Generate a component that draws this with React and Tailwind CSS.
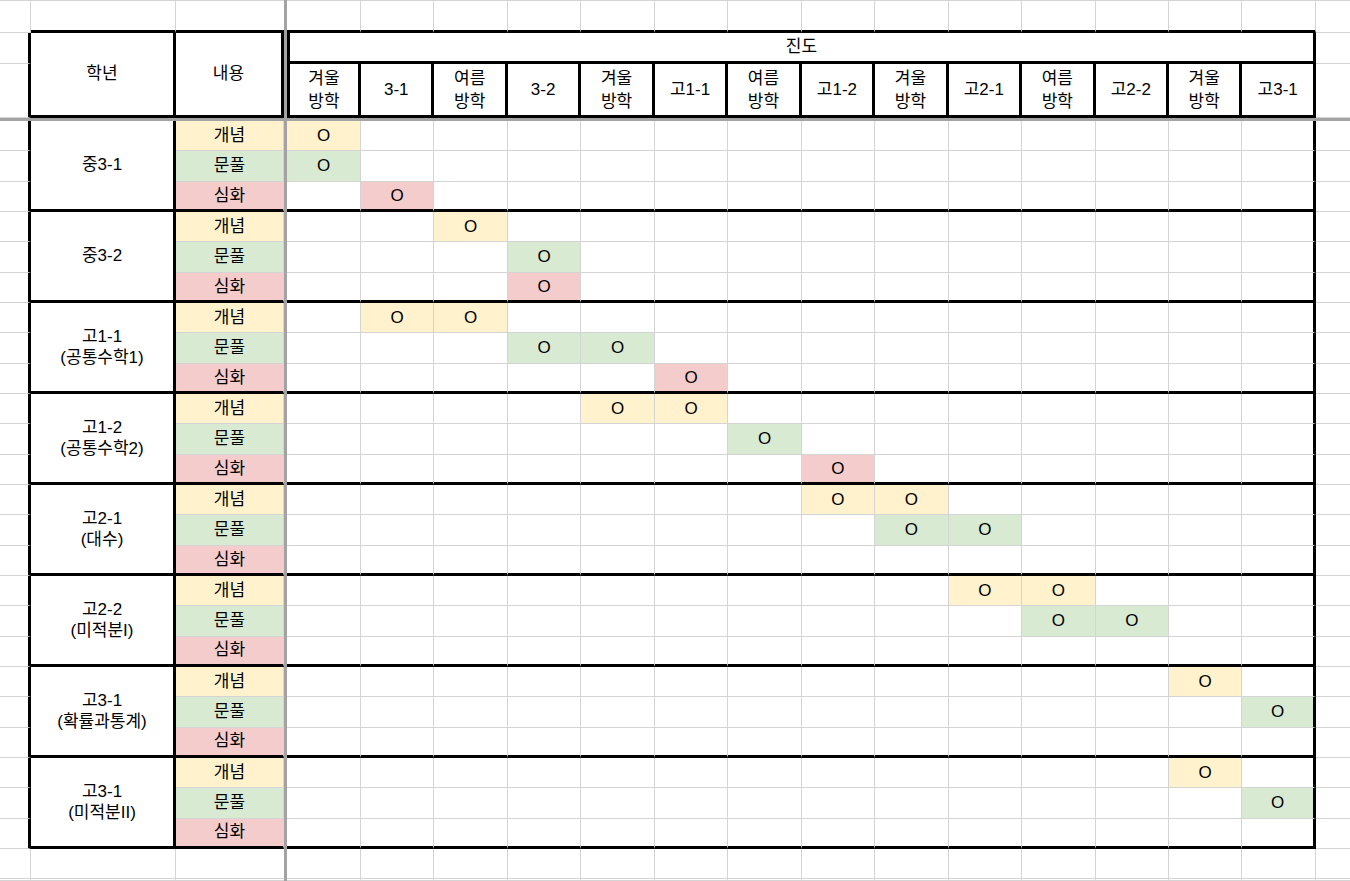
import React from 'react'

const periods = [
  ['겨울', '방학'], ['3-1'], ['여름', '방학'], ['3-2'], ['겨울', '방학'], ['고1-1'], ['여름', '방학'],
  ['고1-2'], ['겨울', '방학'], ['고2-1'], ['여름', '방학'], ['고2-2'], ['겨울', '방학'], ['고3-1'],
]

// each block: label lines, and the columns marked for 개념 / 문풀 / 심화
const blocks = [
  { label: ['중3-1'], marks: [[0], [0], [1]] },
  { label: ['중3-2'], marks: [[2], [3], [3]] },
  { label: ['고1-1', '(공통수학1)'], marks: [[1, 2], [3, 4], [5]] },
  { label: ['고1-2', '(공통수학2)'], marks: [[4, 5], [6], [7]] },
  { label: ['고2-1', '(대수)'], marks: [[7, 8], [8, 9], []] },
  { label: ['고2-2', '(미적분I)'], marks: [[9, 10], [10, 11], []] },
  { label: ['고3-1', '(확률과통계)'], marks: [[12], [13], []] },
  { label: ['고3-1', '(미적분II)'], marks: [[12], [13], []] },
]

const kinds = [
  { name: '개념', bg: 'bg-[#fff2cc]' },
  { name: '문풀', bg: 'bg-[#d9ead3]' },
  { name: '심화', bg: 'bg-[#f4cccc]' },
]

const center = 'flex items-center justify-center text-center'

function HeaderRows() {
  const cells = []
  // row 1 above the table
  cells.push(<div key="r1a" className="border-r border-b border-[#d4d4d4]" />)
  cells.push(<div key="r1b" className="border-r border-r-[#d4d4d4] border-b-[3px] border-b-black" />)
  cells.push(<div key="r1c" className="border-b-[3px] border-b-black" />)
  cells.push(<div key="r1s" className="border-b-[3px] border-b-black" />)
  periods.forEach((_, i) => {
    cells.push(<div key={'r1p' + i} className="border-r border-r-[#d4d4d4] border-b-[3px] border-b-black" />)
  })
  cells.push(<div key="r1r" className="border-b border-[#d4d4d4]" />)

  // row 2: titles
  cells.push(<div key="r2a" className="border-r-[3px] border-r-black border-b border-b-[#d4d4d4]" />)
  cells.push(
    <div key="r2b" className={`row-span-2 border-r-[3px] border-b-[3px] border-black ${center}`}>학년</div>
  )
  cells.push(
    <div key="r2c" className={`row-span-2 border-r-[3px] border-b-[3px] border-black ${center}`}>내용</div>
  )
  cells.push(<div key="r2s" className="row-span-2 border-b-[3px] border-black" />)
  cells.push(
    <div key="r2d" className={`col-span-14 border-l-[3px] border-r-[3px] border-b-[3px] border-black ${center}`}>진도</div>
  )
  cells.push(<div key="r2r" className="border-b border-[#d4d4d4]" />)

  // row 3: periods
  cells.push(<div key="r3a" className="border-r-[3px] border-r-black border-b border-b-[#d4d4d4]" />)
  periods.forEach((p, i) => {
    cells.push(
      <div
        key={'r3p' + i}
        className={`${i === 0 ? 'border-l-[3px]' : ''} border-r-[3px] border-b-[3px] border-black leading-[23px] ${center} flex-col`}
      >
        {p.map((t) => <span key={t}>{t}</span>)}
      </div>
    )
  })
  cells.push(<div key="r3r" className="border-b border-[#d4d4d4]" />)
  return cells
}

function BlockRows({ block, bi }) {
  const cells = []
  block.marks.forEach((marked, r) => {
    const last = r === 2
    const bottom = last ? 'border-b-[3px] border-b-black' : 'border-b border-b-[#d4d4d4]'
    cells.push(<div key={`a${bi}${r}`} className="border-r-[3px] border-r-black border-b border-b-[#d4d4d4]" />)
    if (r === 0) {
      cells.push(
        <div
          key={`b${bi}`}
          className={`row-span-3 border-r-[3px] border-b-[3px] border-black leading-[21px] flex-col ${center}`}
        >
          {block.label.map((t) => <span key={t}>{t}</span>)}
        </div>
      )
    }
    cells.push(
      <div key={`c${bi}${r}`} className={`${kinds[r].bg} border-r border-r-[#d4d4d4] ${bottom} ${center}`}>
        {kinds[r].name}
      </div>
    )
    cells.push(<div key={`s${bi}${r}`} className={last ? 'border-b-[3px] border-b-black' : ''} />)
    periods.forEach((_, i) => {
      const on = marked.includes(i)
      const right = i === 13 ? 'border-r-[3px] border-r-black' : 'border-r border-r-[#d4d4d4]'
      cells.push(
        <div key={`d${bi}${r}${i}`} className={`${on ? kinds[r].bg : ''} ${right} ${bottom} ${center}`}>
          {on ? 'O' : ''}
        </div>
      )
    })
    cells.push(<div key={`r${bi}${r}`} className="border-b border-[#d4d4d4]" />)
  })
  return cells
}

function TailRow({ id }) {
  const cells = []
  cells.push(<div key={id + 'a'} className="border-r border-b border-[#d4d4d4]" />)
  cells.push(<div key={id + 'b'} className="border-r border-b border-[#d4d4d4]" />)
  cells.push(<div key={id + 'c'} className="border-b border-[#d4d4d4]" />)
  cells.push(<div key={id + 's'} />)
  periods.forEach((_, i) => {
    cells.push(<div key={id + i} className="border-r border-b border-[#d4d4d4]" />)
  })
  cells.push(<div key={id + 'r'} className="border-b border-[#d4d4d4]" />)
  return cells
}

export default function App() {
  return (
    <div className="relative w-[1350px] h-[881px] overflow-hidden bg-white text-[17px] text-black font-['Liberation_Sans','Noto_Sans_CJK_KR',sans-serif]">
      <div className="grid w-full h-full grid-cols-[31px_145px_108px_3px_74px_repeat(13,73.46px)_1fr] grid-rows-[1px_32px_31px_54px_3px_repeat(24,30.33px)_30px_1fr]">
        <div className="col-span-full bg-[#d4d4d4]" />
        {HeaderRows()}
        <div className="col-span-full" />
        {blocks.map((b, bi) => BlockRows({ block: b, bi }))}
        {TailRow({ id: 't1' })}
        {TailRow({ id: 't2' })}
      </div>
      {/* frozen pane bars */}
      <div className="absolute left-[284px] top-0 w-[3px] h-full bg-[#a3a3a3]" />
      <div className="absolute left-0 top-[118px] w-full h-[3px] bg-[#a3a3a3]" />
    </div>
  )
}
